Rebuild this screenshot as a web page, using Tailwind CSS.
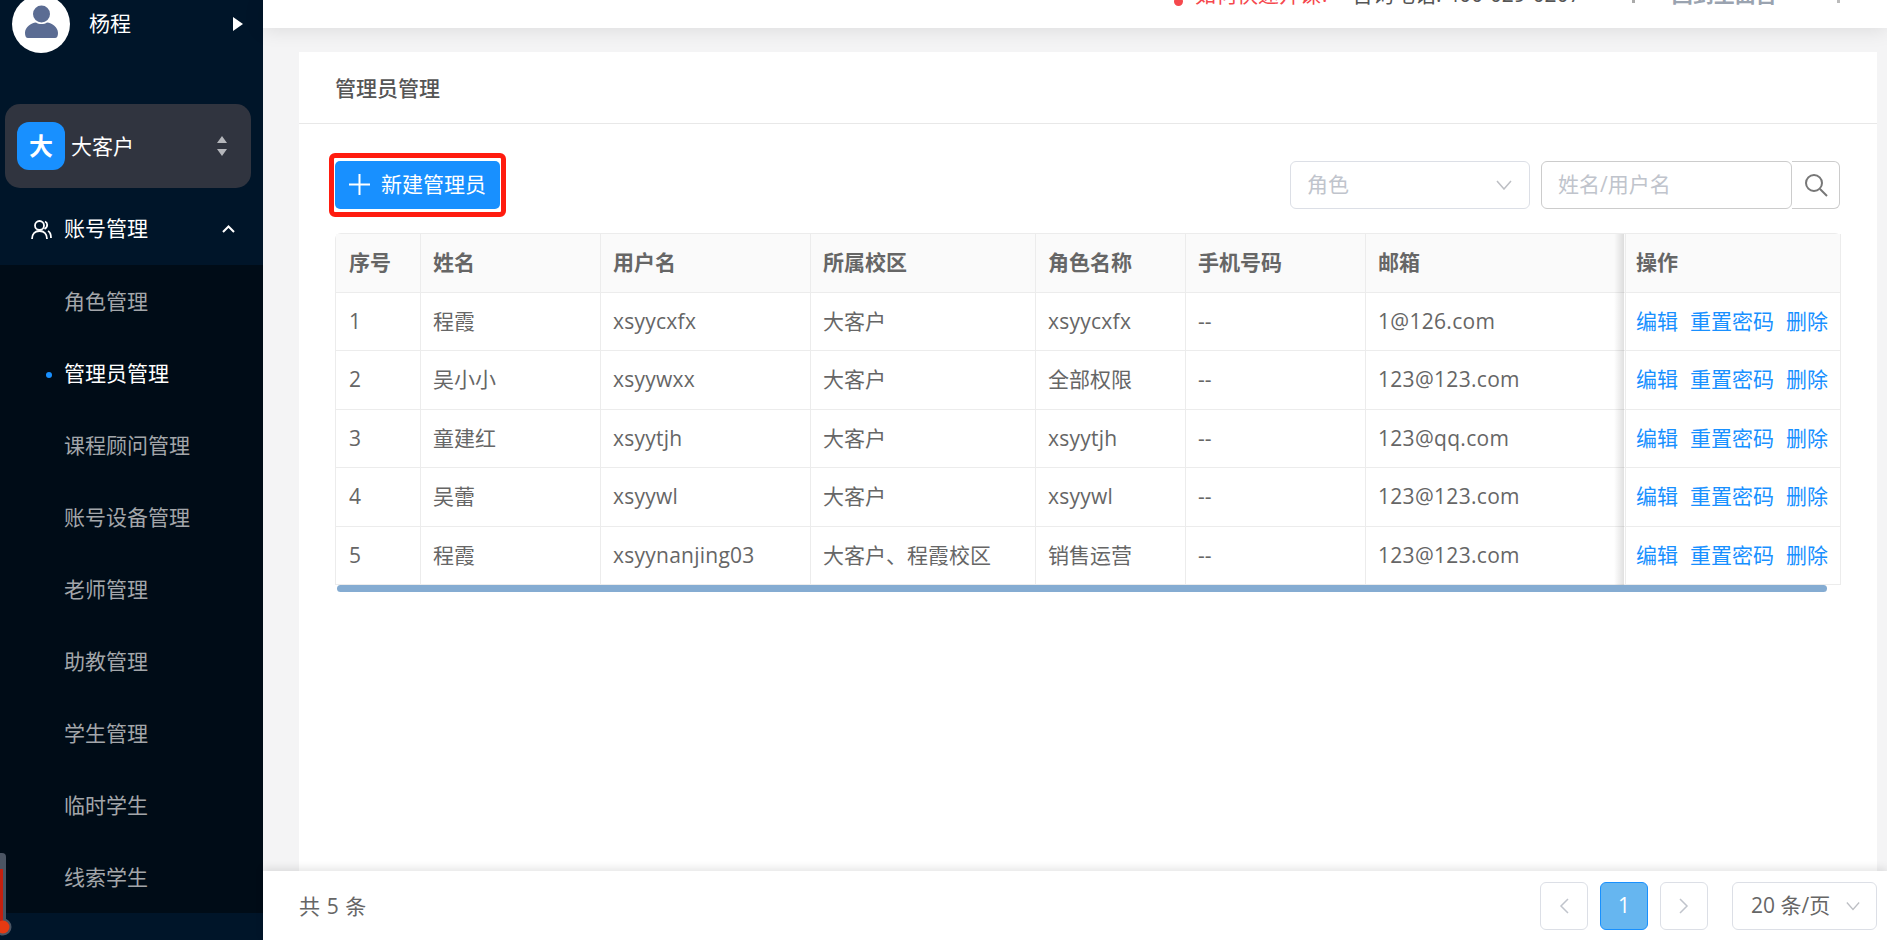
<!DOCTYPE html>
<html lang="zh-CN">
<head>
    <meta charset="UTF-8">
    <title>管理员管理</title>
    <script src="https://cdn.jsdelivr.net/npm/@tailwindcss/browser@4"></script>
</head>
<body class="h-screen overflow-hidden bg-[#f4f4f5] text-[21px] text-[#666] font-['Open_Sans','Noto_Sans_CJK_SC',sans-serif]">
<div class="flex h-[940px] w-[1887px] overflow-hidden">
    <!-- Sidebar -->
    <aside class="relative w-[263px] shrink-0 overflow-hidden bg-[#001529] text-white">
        <div class="flex items-center h-[58px] -mt-[5px] pl-[12px]">
            <div class="flex items-center justify-center w-[58px] h-[58px] rounded-full bg-white">
                <svg class="w-[58px] h-[58px]" viewBox="0 0 58 58" fill="#5b6c93">
                    <circle cx="29.5" cy="19" r="8.5"/>
                    <path d="M13 38c0-6 6-10 11-10.500 3 2 8 2 11 0 5 .5 11 4.500 11 10.500 0 3-1 5-3 5H16c-2 0-3-2-3-5z"/>
                </svg>
            </div>
            <span class="ml-[19px]">杨程</span>
            <svg class="ml-[102px] w-[10px] h-[14px]" viewBox="0 0 10 14" fill="#fff"><path d="M0 0l10 7-10 7z"/></svg>
        </div>
        <div class="flex items-center h-[84px] mt-[51px] mx-[5px] w-[246px] pl-[12px] rounded-[15px] bg-[#30343f]">
            <div class="flex items-center justify-center w-[48px] h-[48px] rounded-[12px] bg-[#1890ff] font-bold text-[24px]">大</div>
            <span class="ml-[6px] pt-[1px]">大客户</span>
            <svg class="ml-[83px] w-[10px] h-[20px]" viewBox="0 0 10 20" fill="#b4b6bb"><path d="M5 0l5 7H0zM5 20l5-7H0z"/></svg>
        </div>
        <div class="flex items-center h-[77px] pt-[5px] pl-[31px]">
            <svg class="w-[21px] h-[21px]" viewBox="0 0 21 21" fill="none" stroke="#fff" stroke-width="1.800">
                <circle cx="8.500" cy="6.500" r="4.500"/>
                <path d="M1 20c0-5 3-8 7.500-8s7.500 3 7.500 8M14 2.500c2.500 1 3.500 5-.5 7.500M17 12c2 1 3 4 3 7"/>
            </svg>
            <span class="ml-[12px]">账号管理</span>
            <svg class="ml-[74px] w-[13px] h-[8px]" viewBox="0 0 13 8" fill="none" stroke="#fff" stroke-width="2"><path d="M1 7l5.500-5.500L12 7"/></svg>
        </div>
        <ul class="bg-[#000c17] text-[#a3a6aa]">
            <li class="flex items-center h-[72px] pl-[64px] pt-[1px]">角色管理</li>
            <li class="relative flex items-center h-[72px] pl-[64px] pt-[1px] text-white">
                <span class="absolute left-[46px] top-[35px] w-[6px] h-[6px] rounded-full bg-[#1890ff]"></span>管理员管理
            </li>
            <li class="flex items-center h-[72px] pl-[64px] pt-[1px]">课程顾问管理</li>
            <li class="flex items-center h-[72px] pl-[64px] pt-[1px]">账号设备管理</li>
            <li class="flex items-center h-[72px] pl-[64px] pt-[1px]">老师管理</li>
            <li class="flex items-center h-[72px] pl-[64px] pt-[1px]">助教管理</li>
            <li class="flex items-center h-[72px] pl-[64px] pt-[1px]">学生管理</li>
            <li class="flex items-center h-[72px] pl-[64px] pt-[1px]">临时学生</li>
            <li class="flex items-center h-[72px] pl-[64px] pt-[1px]">线索学生</li>
        </ul>
        <div class="flex items-center h-[72px] pl-[64px] pt-[12px]">教务管理</div>
        <!-- thermometer widget stuck to the window edge -->
        <svg class="absolute left-0 top-[853px] w-[12px] h-[84px]" viewBox="0 0 12 84">
            <path d="M-6 4a4 4 0 0 1 4-4h4a4 4 0 0 1 4 4v66h-12z" fill="#4b5563"/>
            <circle cx="3" cy="74" r="8.500" fill="#4b5563"/>
            <rect x="0" y="16" width="3" height="58" fill="#c4200f"/>
            <circle cx="3" cy="74" r="6.500" fill="#e63a12"/>
        </svg>
    </aside>

    <main class="flex flex-1 flex-col min-w-0">
        <!-- Top bar, mostly scrolled out of view -->
        <header class="relative z-10 h-[28px] shrink-0 overflow-hidden bg-white shadow-[0_2px_20px_rgba(0,0,0,0.10)]">
            <div class="flex items-center h-[30px] -mt-[20px] pl-[911px] whitespace-nowrap">
                <span class="w-[9px] h-[9px] translate-y-[6px] rounded-full bg-[#f5484d]"></span>
                <span class="ml-[12px] text-[#f5484d]">如何快速开课?</span>
                <span class="ml-[22px] text-[#555]">咨询电话: 400-029-0207</span>
                <span class="ml-[51px] w-[3px] h-[8px] translate-y-[4px] bg-[#aaa]"></span>
                <span class="ml-[37px] font-bold text-[#9aa3b0]">回到主面首</span>
                <span class="ml-[60px] w-[3px] h-[8px] translate-y-[4px] bg-[#bbb]"></span>
            </div>
        </header>

        <div class="flex-1 min-h-0 pt-[24px] pl-[36px] pr-[10px]">
            <section class="h-full bg-white">
                <div class="flex items-center h-[72px] pt-[3px] pl-[36px] border-b border-[#e8e8e8] font-medium text-[#555]">管理员管理</div>
                <div class="flex items-center h-[109px] pt-[12px] pl-[30px] pr-[37px]">
                    <div class="rounded-[6px] border-[5px] border-[#ff1c0f] px-[1px] py-[3px]">
                        <button class="flex items-center h-[48px] w-[165px] pl-[14px] rounded-[5px] bg-[#1890ff] text-white">
                            <svg class="w-[21px] h-[21px]" viewBox="0 0 21 21" stroke="#fff" stroke-width="2"><path d="M10.500 0v21M0 10.500h21"/></svg>
                            <span class="ml-[11px]">新建管理员</span>
                        </button>
                    </div>
                    <div class="flex items-center h-[48px] w-[240px] ml-auto pl-[16px] pr-[17px] rounded-[6px] border border-[#dcdfe6] text-[#c0c4cc]">
                        角色
                        <svg class="ml-auto w-[16px] h-[10px]" viewBox="0 0 16 10" fill="none" stroke="#bdbfc4" stroke-width="1.500"><path d="M1 1l7 8 7-8"/></svg>
                    </div>
                    <div class="flex items-center h-[48px] w-[251px] ml-[11px] pl-[16px] rounded-[6px] border border-[#ccc] text-[#c0c4cc]">姓名/用户名</div>
                    <div class="flex items-center justify-center h-[48px] w-[48px] rounded-r-[6px] border border-l-0 border-[#ccc]">
                        <svg class="w-[24px] h-[24px]" viewBox="0 0 24 24" fill="none" stroke="#777" stroke-width="2"><circle cx="10" cy="10" r="8"/><path d="M16 16l7 7"/></svg>
                    </div>
                </div>

                <div class="relative w-[1506px] ml-[36px]">
                    <table class="w-full table-fixed border-separate border-spacing-0 border-l border-t border-[#ececec] rounded-t-[6px]">
                        <colgroup>
                            <col class="w-[85px]"><col class="w-[180px]"><col class="w-[210px]"><col class="w-[225px]"><col class="w-[150px]"><col class="w-[180px]"><col class="w-[259px]"><col class="w-[216px]">
                        </colgroup>
                        <thead class="bg-[#fafafa] font-bold text-left">
                            <tr class="h-[59px]">
                                <th class="pl-[13px] border-r border-b border-[#ececec]">序号</th>
                                <th class="pl-[12px] border-r border-b border-[#ececec]">姓名</th>
                                <th class="pl-[12px] border-r border-b border-[#ececec]">用户名</th>
                                <th class="pl-[12px] border-r border-b border-[#ececec]">所属校区</th>
                                <th class="pl-[12px] border-r border-b border-[#ececec]">角色名称</th>
                                <th class="pl-[12px] border-r border-b border-[#ececec]">手机号码</th>
                                <th class="pl-[12px] border-b border-[#ececec]">邮箱</th>
                                <th class="pl-[10px] border-l border-r border-b border-[#ececec]">操作</th>
                            </tr>
                        </thead>
                        <tbody>
                            <tr class="h-[58.400px]">
                                <td class="pl-[13px] border-r border-b border-[#ececec]">1</td>
                                <td class="pl-[12px] border-r border-b border-[#ececec]">程霞</td>
                                <td class="pl-[12px] tracking-[0.25px] border-r border-b border-[#ececec]">xsyycxfx</td>
                                <td class="pl-[12px] border-r border-b border-[#ececec]">大客户</td>
                                <td class="pl-[12px] tracking-[0.25px] border-r border-b border-[#ececec]">xsyycxfx</td>
                                <td class="pl-[12px] border-r border-b border-[#ececec]">--</td>
                                <td class="pl-[12px] tracking-[0.3px] border-b border-[#ececec]">1@126.com</td>
                                <td class="pl-[10px] border-l border-r border-b border-[#ececec] text-[#1890ff]">编辑<span class="ml-[12px]">重置密码</span><span class="ml-[12px]">删除</span></td>
                            </tr>
                            <tr class="h-[58.400px]">
                                <td class="pl-[13px] border-r border-b border-[#ececec]">2</td>
                                <td class="pl-[12px] border-r border-b border-[#ececec]">吴小小</td>
                                <td class="pl-[12px] tracking-[0.25px] border-r border-b border-[#ececec]">xsyywxx</td>
                                <td class="pl-[12px] border-r border-b border-[#ececec]">大客户</td>
                                <td class="pl-[12px] border-r border-b border-[#ececec]">全部权限</td>
                                <td class="pl-[12px] border-r border-b border-[#ececec]">--</td>
                                <td class="pl-[12px] tracking-[0.3px] border-b border-[#ececec]">123@123.com</td>
                                <td class="pl-[10px] border-l border-r border-b border-[#ececec] text-[#1890ff]">编辑<span class="ml-[12px]">重置密码</span><span class="ml-[12px]">删除</span></td>
                            </tr>
                            <tr class="h-[58.400px]">
                                <td class="pl-[13px] border-r border-b border-[#ececec]">3</td>
                                <td class="pl-[12px] border-r border-b border-[#ececec]">童建红</td>
                                <td class="pl-[12px] tracking-[0.25px] border-r border-b border-[#ececec]">xsyytjh</td>
                                <td class="pl-[12px] border-r border-b border-[#ececec]">大客户</td>
                                <td class="pl-[12px] tracking-[0.25px] border-r border-b border-[#ececec]">xsyytjh</td>
                                <td class="pl-[12px] border-r border-b border-[#ececec]">--</td>
                                <td class="pl-[12px] tracking-[0.3px] border-b border-[#ececec]">123@qq.com</td>
                                <td class="pl-[10px] border-l border-r border-b border-[#ececec] text-[#1890ff]">编辑<span class="ml-[12px]">重置密码</span><span class="ml-[12px]">删除</span></td>
                            </tr>
                            <tr class="h-[58.400px]">
                                <td class="pl-[13px] border-r border-b border-[#ececec]">4</td>
                                <td class="pl-[12px] border-r border-b border-[#ececec]">吴蕾</td>
                                <td class="pl-[12px] tracking-[0.25px] border-r border-b border-[#ececec]">xsyywl</td>
                                <td class="pl-[12px] border-r border-b border-[#ececec]">大客户</td>
                                <td class="pl-[12px] tracking-[0.25px] border-r border-b border-[#ececec]">xsyywl</td>
                                <td class="pl-[12px] border-r border-b border-[#ececec]">--</td>
                                <td class="pl-[12px] tracking-[0.3px] border-b border-[#ececec]">123@123.com</td>
                                <td class="pl-[10px] border-l border-r border-b border-[#ececec] text-[#1890ff]">编辑<span class="ml-[12px]">重置密码</span><span class="ml-[12px]">删除</span></td>
                            </tr>
                            <tr class="h-[58.400px]">
                                <td class="pl-[13px] border-r border-b border-[#ececec]">5</td>
                                <td class="pl-[12px] border-r border-b border-[#ececec]">程霞</td>
                                <td class="pl-[12px] tracking-[0.25px] border-r border-b border-[#ececec]">xsyynanjing03</td>
                                <td class="pl-[12px] border-r border-b border-[#ececec]">大客户、程霞校区</td>
                                <td class="pl-[12px] border-r border-b border-[#ececec]">销售运营</td>
                                <td class="pl-[12px] border-r border-b border-[#ececec]">--</td>
                                <td class="pl-[12px] tracking-[0.3px] border-b border-[#ececec]">123@123.com</td>
                                <td class="pl-[10px] border-l border-r border-b border-[#ececec] text-[#1890ff]">编辑<span class="ml-[12px]">重置密码</span><span class="ml-[12px]">删除</span></td>
                            </tr>
                        </tbody>
                    </table>
                    <!-- shadow of the fixed column -->
                    <div class="absolute top-[1px] bottom-[7px] left-[1279px] w-[10px] bg-gradient-to-l from-black/12 to-transparent"></div>
                    <!-- horizontal scrollbar -->
                    <div class="h-[7px] w-[1490px] ml-[2px] rounded-full bg-[#85acd2]"></div>
                </div>
            </section>
        </div>

        <!-- Footer / pagination -->
        <footer class="relative z-10 flex items-center h-[69px] shrink-0 pl-[36px] pr-[10px] bg-white shadow-[0_-3px_8px_rgba(0,0,0,0.10)]">
            <span class="pt-[2px] tracking-[0.6px]">共 5 条</span>
            <div class="flex items-center ml-auto gap-[12px]">
                <div class="flex items-center justify-center w-[48px] h-[48px] rounded-[6px] border border-[#dcdfe6]">
                    <svg class="w-[10px] h-[16px]" viewBox="0 0 10 16" fill="none" stroke="#c0c4cc" stroke-width="1.500"><path d="M9 1L2 8l7 7"/></svg>
                </div>
                <div class="flex items-center justify-center w-[48px] h-[48px] rounded-[6px] border border-[#1890ff] bg-[#66b6f0] text-white">1</div>
                <div class="flex items-center justify-center w-[48px] h-[48px] rounded-[6px] border border-[#dcdfe6]">
                    <svg class="w-[10px] h-[16px]" viewBox="0 0 10 16" fill="none" stroke="#c0c4cc" stroke-width="1.500"><path d="M1 1l7 7-7 7"/></svg>
                </div>
                <div class="flex items-center w-[145px] h-[48px] ml-[12px] pl-[18px] pr-[16px] rounded-[6px] border border-[#dcdfe6]">
                    <span class="pt-[1px] whitespace-nowrap">20 条/页</span>
                    <svg class="ml-auto w-[14px] h-[10px]" viewBox="0 0 16 10" fill="none" stroke="#bdbfc4" stroke-width="1.500"><path d="M1 1l7 8 7-8"/></svg>
                </div>
            </div>
        </footer>
    </main>
</div>
</body>
</html>
